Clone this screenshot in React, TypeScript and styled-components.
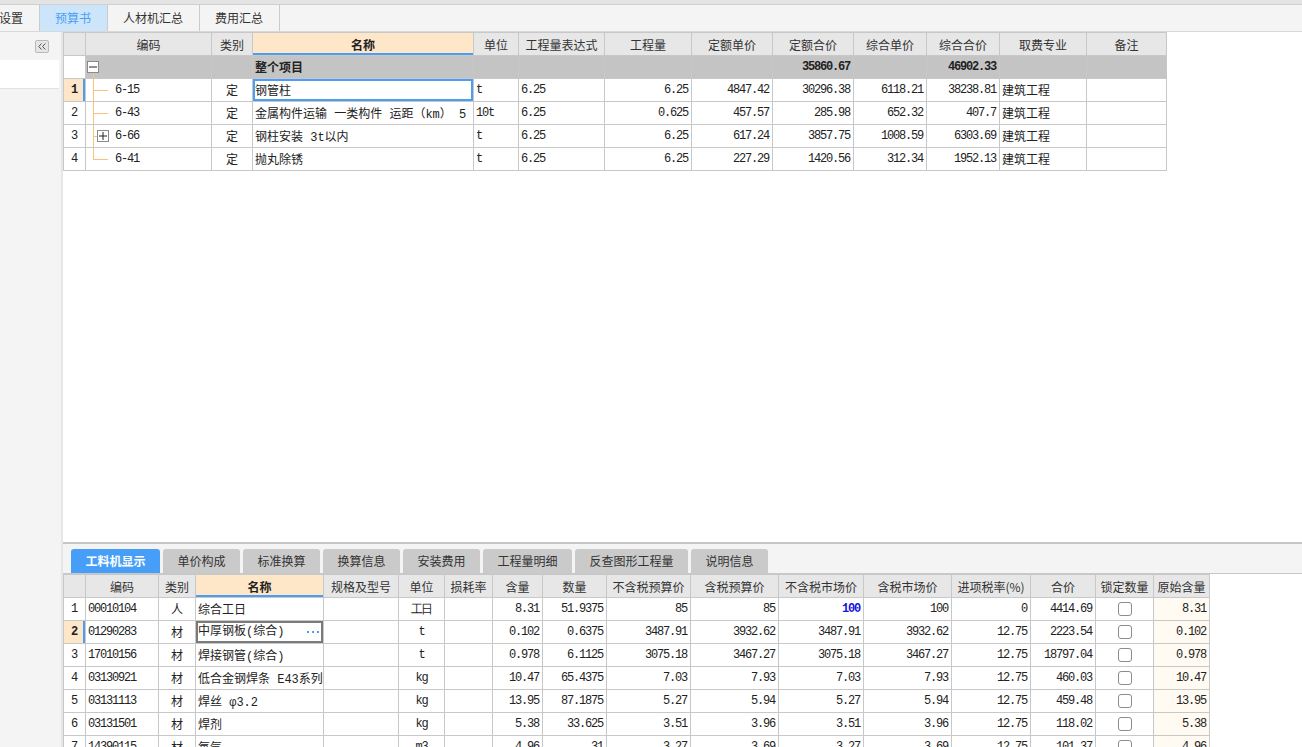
import styled, { createGlobalStyle, css } from "styled-components";

const BLUE = "#4a9ff5";
const PEACH = "#fee6c8";
const LINE = "#c8c8c8";
const TREE = "#f8c27c";

const GlobalStyle = createGlobalStyle`
  html, body { margin: 0; padding: 0; }
  body {
    font-family: "Liberation Mono", "Noto Sans CJK SC", monospace;
    font-size: 12px;
    color: #222;
    background: #fff;
  }
`;

type Align = "left" | "center" | "right";

interface Col {
  title: string;
  width: number;
  align: Align;
  num?: boolean;
  hl?: boolean;
}

const upperCols: Col[] = [
  { title: "", width: 22, align: "center" },
  { title: "编码", width: 126, align: "left", num: true },
  { title: "类别", width: 41, align: "center" },
  { title: "名称", width: 221, align: "left", hl: true },
  { title: "单位", width: 45, align: "left", num: true },
  { title: "工程量表达式", width: 86, align: "left", num: true },
  { title: "工程量", width: 87, align: "right", num: true },
  { title: "定额单价", width: 81, align: "right", num: true },
  { title: "定额合价", width: 81, align: "right", num: true },
  { title: "综合单价", width: 73, align: "right", num: true },
  { title: "综合合价", width: 73, align: "right", num: true },
  { title: "取费专业", width: 87, align: "left" },
  { title: "备注", width: 80, align: "left" },
];

const upperRows: string[][] = [
  ["6-15", "定", "钢管柱", "t", "6.25", "6.25", "4847.42", "30296.38", "6118.21", "38238.81", "建筑工程", ""],
  ["6-43", "定", "金属构件运输 一类构件 运距（km） 5", "10t", "6.25", "0.625", "457.57", "285.98", "652.32", "407.7", "建筑工程", ""],
  ["6-66", "定", "钢柱安装 3t以内", "t", "6.25", "6.25", "617.24", "3857.75", "1008.59", "6303.69", "建筑工程", ""],
  ["6-41", "定", "抛丸除锈", "t", "6.25", "6.25", "227.29", "1420.56", "312.34", "1952.13", "建筑工程", ""],
];

const lowerCols: Col[] = [
  { title: "", width: 22, align: "center" },
  { title: "编码", width: 73, align: "left", num: true },
  { title: "类别", width: 37, align: "center" },
  { title: "名称", width: 128, align: "left", hl: true },
  { title: "规格及型号", width: 75, align: "left" },
  { title: "单位", width: 46, align: "center", num: true },
  { title: "损耗率", width: 48, align: "right", num: true },
  { title: "含量", width: 50, align: "right", num: true },
  { title: "数量", width: 64, align: "right", num: true },
  { title: "不含税预算价", width: 84, align: "right", num: true },
  { title: "含税预算价", width: 88, align: "right", num: true },
  { title: "不含税市场价", width: 85, align: "right", num: true },
  { title: "含税市场价", width: 88, align: "right", num: true },
  { title: "进项税率(%)", width: 79, align: "right", num: true },
  { title: "合价", width: 65, align: "right", num: true },
  { title: "锁定数量", width: 58, align: "center" },
  { title: "原始含量", width: 56, align: "right", num: true },
];

const lowerRows: string[][] = [
  ["00010104", "人", "综合工日", "", "工日", "", "8.31", "51.9375", "85", "85", "100", "100", "0", "4414.69", "", "8.31"],
  ["01290283", "材", "中厚钢板(综合)", "", "t", "", "0.102", "0.6375", "3487.91", "3932.62", "3487.91", "3932.62", "12.75", "2223.54", "", "0.102"],
  ["17010156", "材", "焊接钢管(综合)", "", "t", "", "0.978", "6.1125", "3075.18", "3467.27", "3075.18", "3467.27", "12.75", "18797.04", "", "0.978"],
  ["03130921", "材", "低合金钢焊条 E43系列", "", "kg", "", "10.47", "65.4375", "7.03", "7.93", "7.03", "7.93", "12.75", "460.03", "", "10.47"],
  ["03131113", "材", "焊丝 φ3.2", "", "kg", "", "13.95", "87.1875", "5.27", "5.94", "5.27", "5.94", "12.75", "459.48", "", "13.95"],
  ["03131501", "材", "焊剂", "", "kg", "", "5.38", "33.625", "3.51", "3.96", "3.51", "3.96", "12.75", "118.02", "", "5.38"],
  ["14390115", "材", "氧气", "", "m3", "", "4.96", "31", "3.27", "3.69", "3.27", "3.69", "12.75", "101.37", "", "4.96"],
];

const moduleTabs = ["设置", "预算书", "人材机汇总", "费用汇总"];
const detailTabs = ["工料机显示", "单价构成", "标准换算", "换算信息", "安装费用", "工程量明细", "反查图形工程量", "说明信息"];

const Shell = styled.div`
  width: 1302px;
  height: 747px;
  overflow: hidden;
  display: flex;
  flex-direction: column;
`;

const TopStrip = styled.div`
  flex-shrink: 0;
  height: 4px;
  background: #e3e3e3;
  border-bottom: 1px solid #d0d0d0;
`;

const ModuleBar = styled.div`
  flex-shrink: 0;
  height: 26px;
  display: flex;
  background: #f4f4f4;
  border-bottom: 1px solid #d8d8d8;
  font-family: "Noto Sans CJK SC", sans-serif;
`;

const ModuleTab = styled.div<{ $active?: boolean; $cut?: boolean }>`
  padding: 0 15.5px;
  line-height: 26px;
  color: #333;
  border-right: 1px solid #cbcbcb;
  white-space: nowrap;
  ${(p) => p.$cut && css`padding-left: 0; margin-left: -1px;`}
  ${(p) => p.$active && css`background: #cde5fb; color: ${BLUE};`}
`;

const Body = styled.div`
  flex: 1;
  display: flex;
  min-height: 0;
`;

const SidePanel = styled.div`
  width: 61px;
  flex-shrink: 0;
  background: #f4f4f4;
  border-right: 2px solid #e6e6e6;
  display: flex;
  flex-direction: column;
`;

const SideHead = styled.div`
  height: 28px;
  display: flex;
  justify-content: flex-end;
  align-items: flex-start;
  padding: 8px 12px 0 0;
  box-sizing: border-box;
`;

const CollapseBtn = styled.div`
  width: 14px;
  height: 13px;
  box-sizing: border-box;
  border: 1px solid #b9b9b9;
  border-radius: 2px;
  background: #e6e6e6;
  display: flex;
  align-items: center;
  justify-content: center;
`;

const SideBox = styled.div`
  height: 28px;
  margin-right: 2px;
  background: #fff;
  border-bottom: 1px solid #e2e2e2;
`;

const Workspace = styled.div`
  flex: 1;
  min-width: 0;
  display: flex;
  flex-direction: column;
`;

const UpperPane = styled.div`
  flex-shrink: 0;
  height: 510px;
  background: #fff;
  overflow: hidden;
`;

const Splitter = styled.div`
  flex-shrink: 0;
  height: 2px;
  background: #c6c6c6;
`;

const LowerPane = styled.div`
  flex: 1;
  min-height: 0;
  background: #fff;
  overflow: hidden;
  display: flex;
  flex-direction: column;
`;

const DetailBar = styled.div`
  flex-shrink: 0;
  height: 30px;
  box-sizing: border-box;
  background: #f4f4f4;
  border-bottom: 1px solid #c8c8c8;
  display: flex;
  align-items: flex-end;
  gap: 3px;
  padding-left: 8px;
  font-family: "Noto Sans CJK SC", sans-serif;
`;

const DetailTab = styled.div<{ $active?: boolean }>`
  height: 24px;
  line-height: 24px;
  padding: 0 14.5px;
  border-radius: 3px 3px 0 0;
  background: ${(p) => (p.$active ? "#479ef6" : "#cacaca")};
  color: ${(p) => (p.$active ? "#fff" : "#333")};
  font-weight: ${(p) => (p.$active ? 700 : 400)};
  white-space: nowrap;
`;

const GridWrap = styled.div`
  flex-shrink: 0;
`;

const Grid = styled.table<{ $w: number }>`
  border-collapse: collapse;
  table-layout: fixed;
  width: ${(p) => p.$w}px;
  tr { height: 23px; }
`;

const Head = styled.th<{ $hl?: boolean }>`
  border: 1px solid ${LINE};
  background: #e7e7e7;
  font-family: "Noto Sans CJK SC", sans-serif;
  font-weight: 400;
  color: #333;
  padding: 0;
  white-space: nowrap;
  overflow: hidden;
  ${(p) =>
    p.$hl &&
    css`
      background: ${PEACH};
      font-weight: 700;
      color: #222;
      box-shadow: inset 0 -2px 0 ${BLUE};
    `}
`;

const Cell = styled.td<{
  $align: Align;
  $num?: boolean;
  $bg?: string;
  $bold?: boolean;
  $ring?: string;
  $tree?: boolean;
  $color?: string;
}>`
  position: relative;
  border: 1px solid ${LINE};
  padding: 0 ${(p) => (p.$align === "right" ? "3px" : "2px")};
  text-align: ${(p) => p.$align};
  white-space: nowrap;
  overflow: hidden;
  background: ${(p) => p.$bg || "#fff"};
  color: ${(p) => p.$color || "#222"};
  font-weight: ${(p) => (p.$bold ? 700 : 400)};
  ${(p) =>
    p.$num
      ? css`
          font-family: "Liberation Mono", monospace;
          font-size: 12px;
          letter-spacing: -1.2px;
        `
      : css`
          font-family: "Liberation Mono", "Noto Sans CJK SC", monospace;
          font-size: 12px;
        `}
  ${(p) => p.$tree && css`padding-left: 29px;`}
  ${(p) => p.$ring && css`box-shadow: inset 0 0 0 2px ${p.$ring};`}
`;

const RowNo = styled.td<{ $sel?: boolean }>`
  border: 1px solid ${LINE};
  padding: 0;
  text-align: center;
  font-family: "Liberation Mono", monospace;
  font-size: 12px;
  background: #fff;
  ${(p) =>
    p.$sel &&
    css`
      background: ${PEACH};
      font-weight: 700;
      box-shadow: inset -2px 0 0 ${BLUE};
    `}
`;

const Stem = styled.span<{ $last?: boolean; $fromBox?: boolean }>`
  position: absolute;
  left: 7px;
  top: ${(p) => (p.$fromBox ? "17px" : "0")};
  bottom: ${(p) => (p.$last ? "50%" : "0")};
  border-left: 1px solid ${TREE};
`;

const Twig = styled.span<{ $short?: boolean }>`
  position: absolute;
  left: 7px;
  top: 50%;
  width: ${(p) => (p.$short ? "4px" : "15px")};
  border-top: 1px solid ${TREE};
`;

const Toggle = styled.span<{ $left: number }>`
  position: absolute;
  left: ${(p) => p.$left}px;
  top: 50%;
  margin-top: -6px;
  width: 12px;
  height: 12px;
  box-sizing: border-box;
  border: 1px solid #8a8a8a;
  background: #fff;
  display: flex;
  align-items: center;
  justify-content: center;
`;

const Check = styled.span`
  display: inline-block;
  width: 14px;
  height: 14px;
  box-sizing: border-box;
  border: 1px solid #8c8c8c;
  border-radius: 3px;
  background: #fff;
  vertical-align: middle;
`;

const More = styled.span`
  float: right;
  display: flex;
  gap: 3px;
  height: 22px;
  align-items: center;
  margin-right: 2px;
`;

const Dot = styled.i`
  width: 2px;
  height: 2px;
  background: ${BLUE};
`;

function Sign({ plus }: { plus?: boolean }) {
  return (
    <svg width="8" height="8" viewBox="0 0 8 8">
      <path d="M0 4H8" stroke="#222" strokeWidth="1" />
      {plus && <path d="M4 0V8" stroke="#222" strokeWidth="1" />}
    </svg>
  );
}

function ColGroup({ cols }: { cols: Col[] }) {
  return (
    <colgroup>
      {cols.map((c, i) => (
        <col key={i} style={{ width: c.width }} />
      ))}
    </colgroup>
  );
}

const sumWidth = (cols: Col[]) => cols.reduce((s, c) => s + c.width, 0);

function UpperGrid() {
  return (
    <Grid $w={sumWidth(upperCols)}>
      <ColGroup cols={upperCols} />
      <thead>
        <tr>
          {upperCols.map((c, i) => (
            <Head key={i} $hl={c.hl}>{c.title}</Head>
          ))}
        </tr>
      </thead>
      <tbody>
        <tr>
          <RowNo />
          {upperCols.slice(1).map((c, i) => {
            const col = i + 1;
            let text = "";
            if (col === 3) text = "整个项目";
            if (col === 8) text = "35860.67";
            if (col === 10) text = "46902.33";
            return (
              <Cell key={col} $align={c.align} $num={c.num} $bg="#c4c4c4" $bold>
                {col === 1 && (
                  <>
                    <Toggle $left={1}>
                      <Sign />
                    </Toggle>
                    <Stem $fromBox />
                  </>
                )}
                {text}
              </Cell>
            );
          })}
        </tr>
        {upperRows.map((row, r) => (
          <tr key={r}>
            <RowNo $sel={r === 0}>{r + 1}</RowNo>
            {row.map((v, i) => {
              const c = upperCols[i + 1];
              if (i === 0) {
                return (
                  <Cell key={i} $align="left" $num $tree>
                    <Stem $last={r === upperRows.length - 1} />
                    <Twig $short={r === 2} />
                    {r === 2 && (
                      <Toggle $left={11}>
                        <Sign plus />
                      </Toggle>
                    )}
                    {v}
                  </Cell>
                );
              }
              return (
                <Cell key={i} $align={c.align} $num={c.num} $ring={r === 0 && i === 2 ? BLUE : undefined}>
                  {v}
                </Cell>
              );
            })}
          </tr>
        ))}
      </tbody>
    </Grid>
  );
}

function LowerGrid() {
  return (
    <Grid $w={sumWidth(lowerCols)}>
      <ColGroup cols={lowerCols} />
      <thead>
        <tr>
          {lowerCols.map((c, i) => (
            <Head key={i} $hl={c.hl}>{c.title}</Head>
          ))}
        </tr>
      </thead>
      <tbody>
        {lowerRows.map((row, r) => (
          <tr key={r}>
            <RowNo $sel={r === 1}>{r + 1}</RowNo>
            {row.map((v, i) => {
              const c = lowerCols[i + 1];
              if (i === 14) {
                return (
                  <Cell key={i} $align="center">
                    <Check />
                  </Cell>
                );
              }
              const marked = r === 0 && i === 10;
              const editing = r === 1 && i === 2;
              return (
                <Cell
                  key={i}
                  $align={c.align}
                  $num={c.num}
                  $bg={i === 15 ? "#fffaf2" : undefined}
                  $bold={marked}
                  $color={marked ? "#1515d8" : undefined}
                  $ring={editing ? "#7a7a7a" : undefined}
                >
                  {editing && (
                    <More>
                      <Dot />
                      <Dot />
                      <Dot />
                    </More>
                  )}
                  {v}
                </Cell>
              );
            })}
          </tr>
        ))}
      </tbody>
    </Grid>
  );
}

export default function App() {
  return (
    <Shell>
      <GlobalStyle />
      <TopStrip />
      <ModuleBar>
        {moduleTabs.map((t, i) => (
          <ModuleTab key={t} $cut={i === 0} $active={i === 1}>
            {t}
          </ModuleTab>
        ))}
      </ModuleBar>
      <Body>
        <SidePanel>
          <SideHead>
            <CollapseBtn>
              <svg width="8" height="7" viewBox="0 0 8 7">
                <path d="M3.5 0.5L0.8 3.5L3.5 6.5M7.3 0.5L4.6 3.5L7.3 6.5" stroke="#555" strokeWidth="1" fill="none" />
              </svg>
            </CollapseBtn>
          </SideHead>
          <SideBox />
        </SidePanel>
        <Workspace>
          <UpperPane>
            <UpperGrid />
          </UpperPane>
          <Splitter />
          <LowerPane>
            <DetailBar>
              {detailTabs.map((t, i) => (
                <DetailTab key={t} $active={i === 0}>
                  {t}
                </DetailTab>
              ))}
            </DetailBar>
            <GridWrap>
              <LowerGrid />
            </GridWrap>
          </LowerPane>
        </Workspace>
      </Body>
    </Shell>
  );
}
